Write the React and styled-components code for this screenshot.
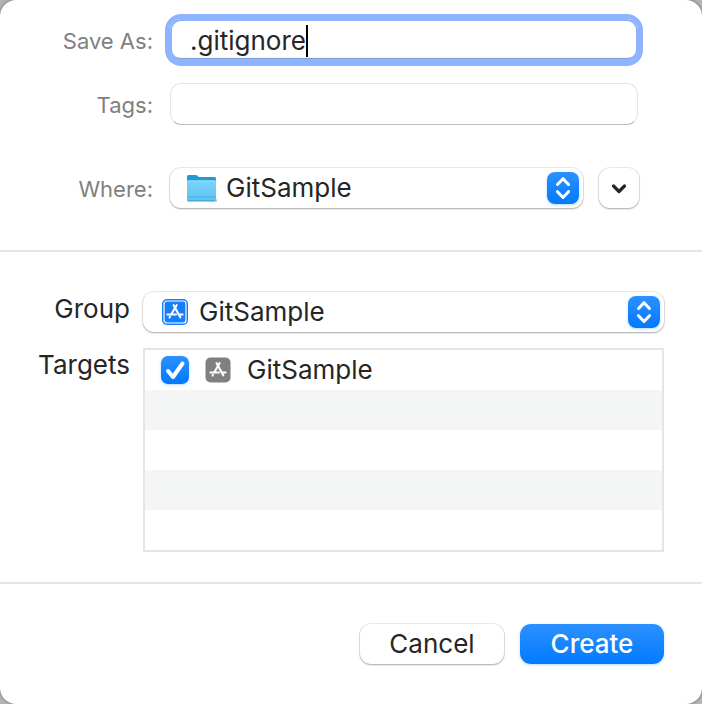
import React, { useState } from 'react';
import styled, { createGlobalStyle, css } from 'styled-components';

const targets = ['GitSample'];
const emptyRows = [1, 2, 3, 4];

const FolderIcon = () => (
  <svg width="32" height="32" viewBox="0 0 32 32" aria-hidden="true">
    <defs>
      <linearGradient id="folderFront" x1="0" y1="0" x2="0" y2="1">
        <stop offset="0" stopColor="#79d2fb" />
        <stop offset="1" stopColor="#5fc3f2" />
      </linearGradient>
    </defs>
    <rect x="1" y="27" width="30" height="3" rx="1" fill="#000" opacity="0.22" />
    <path d="M1 4.500Q1 3 2.500 3H9.500Q10.500 3 11.500 3.800L13 5H28.500Q30 5 30 6.500V12H1Z" fill="#1f9bd7" />
    <path d="M1 9.500Q1 8.500 2 8.500H29Q30 8.500 30 9.500V27.500Q30 29 28.500 29H2.500Q1 29 1 27.500Z" fill="url(#folderFront)" />
    <path d="M1.500 9H29.500" stroke="#9be0fd" strokeWidth="1" />
    <path d="M1 25H30" stroke="#3fa9dc" strokeWidth="0.8" />
    <path d="M2 28.600H29" stroke="#3ca0d0" strokeWidth="0.8" />
  </svg>
);

const AppGlyph = () => (
  <g stroke="#fff" strokeLinecap="round" fill="none">
    <path d="M11.600 6.200L18.300 18.300" strokeWidth="2.100" />
    <path d="M14.600 6.200L9.300 15.200" strokeWidth="2.100" />
    <path d="M5.400 15.400H14" strokeWidth="2" />
    <path d="M17.600 15.400H20.600" strokeWidth="2" />
    <path d="M8 17.700L7.500 18.600" strokeWidth="2" />
  </g>
);

const ProjectIcon = () => (
  <svg width="26" height="26" viewBox="0 0 26 26" aria-hidden="true">
    <rect width="26" height="26" rx="5" fill="#147efb" />
    <rect x="2" y="2" width="22" height="22" rx="3" fill="none" stroke="#fff" strokeWidth="1.200" />
    <AppGlyph />
  </svg>
);

const TargetIcon = () => (
  <svg width="26" height="26" viewBox="0 0 26 26" aria-hidden="true">
    <rect x="0.500" y="0.500" width="25" height="25" rx="5" fill="#808080" />
    <AppGlyph />
  </svg>
);

const StepperArrows = () => (
  <svg width="32" height="32" viewBox="0 0 32 32" aria-hidden="true">
    <path
      d="M10.500 12.500L16 6.700L21.500 12.500M10.500 19.700L16 25.500L21.500 19.700"
      fill="none"
      stroke="#fff"
      strokeWidth="3"
      strokeLinecap="round"
      strokeLinejoin="round"
    />
  </svg>
);

const ChevronIcon = () => (
  <svg width="20" height="20" viewBox="0 0 20 20" aria-hidden="true">
    <path d="M4.500 8L10 13.500L15.500 8" fill="none" stroke="#262626" strokeWidth="3.200" strokeLinecap="round" strokeLinejoin="round" />
  </svg>
);

const PopUp = ({ id, icon }) => (
  <PopUpFrame>
    <PopUpSelect id={id} defaultValue="GitSample">
      <option>GitSample</option>
    </PopUpSelect>
    <PopUpIcon>{icon}</PopUpIcon>
    <Stepper>
      <StepperArrows />
    </Stepper>
  </PopUpFrame>
);

const App = () => {
  const [name, setName] = useState('.gitignore');
  const [tags, setTags] = useState('');
  const [checked, setChecked] = useState(true);

  return (
    <>
      <GlobalStyle />
      <Sheet>
        <FileSection>
          <FileRow>
            <FileLabel htmlFor="name">Save As:</FileLabel>
            <FocusedField>
              <NameInput id="name" value={name} onChange={(e) => setName(e.target.value)} />
              <Caret />
            </FocusedField>
          </FileRow>
          <FileRow>
            <FileLabel htmlFor="tags">Tags:</FileLabel>
            <TagsInput id="tags" value={tags} onChange={(e) => setTags(e.target.value)} />
          </FileRow>
          <FileRow $spaced>
            <FileLabel htmlFor="where">Where:</FileLabel>
            <WhereControls>
              <PopUp id="where" icon={<FolderIcon />} />
              <ExpandButton type="button" aria-label="Show more">
                <ChevronIcon />
              </ExpandButton>
            </WhereControls>
          </FileRow>
        </FileSection>

        <ProjectSection>
          <ProjectRow>
            <ProjectLabel htmlFor="group">Group</ProjectLabel>
            <PopUp id="group" icon={<ProjectIcon />} />
          </ProjectRow>
          <ProjectRow>
            <ProjectLabel as="span" id="targets">Targets</ProjectLabel>
            <TargetTable aria-labelledby="targets">
              <tbody>
                {targets.map((target) => (
                  <TargetRow key={target}>
                    <TargetCell>
                      <TargetLabel>
                        <CheckFrame>
                          <Checkbox
                            type="checkbox"
                            checked={checked}
                            onChange={(e) => setChecked(e.target.checked)}
                          />
                          {checked && (
                            <CheckMark viewBox="0 0 28 28" aria-hidden="true">
                              <path d="M7 15L12 21L21.500 7.500" />
                            </CheckMark>
                          )}
                        </CheckFrame>
                        <TargetIcon />
                        {target}
                      </TargetLabel>
                    </TargetCell>
                  </TargetRow>
                ))}
                {emptyRows.map((row) => (
                  <TargetRow key={row}>
                    <TargetCell />
                  </TargetRow>
                ))}
              </tbody>
            </TargetTable>
          </ProjectRow>
        </ProjectSection>

        <Footer>
          <Button type="button">Cancel</Button>
          <Button type="button" $primary>Create</Button>
        </Footer>
      </Sheet>
    </>
  );
};

const GlobalStyle = createGlobalStyle`
  * {
    box-sizing: border-box;
  }

  body {
    margin: 0;
    background: #b4b4b4;
    color: #262626;
    font-family: Inter, 'Liberation Sans', sans-serif;
    font-size: 26px;
  }

  input, select, button {
    margin: 0;
    font: inherit;
    color: inherit;
  }
`;

const raised = css`
  background: #fff;
  border: 0;
  border-radius: 11px;
  box-shadow: 0 0 0 1px rgba(0, 0, 0, 0.08), 0 1px 2px rgba(0, 0, 0, 0.28);
`;

const blueFill = css`
  background: linear-gradient(#2d91ff, #007aff);
  box-shadow: 0 1px 3px rgba(0, 122, 255, 0.3);
`;

const Sheet = styled.main`
  display: flex;
  flex-direction: column;
  min-height: 100vh;
  background: #fff;
  border-radius: 16px;
  box-shadow: 0 0 3px rgba(0, 0, 0, 0.5);
`;

const FileSection = styled.section`
  display: flex;
  flex-direction: column;
  gap: 22px;
  padding: 19px 63px 42px 0;
  border-bottom: 2px solid #e5e5e5;
`;

const FileRow = styled.div`
  display: grid;
  grid-template-columns: 153px 1fr;
  column-gap: 17px;
  align-items: center;
  margin-top: ${(props) => (props.$spaced ? '21px' : '0')};
`;

const FileLabel = styled.label`
  padding-top: 2px;
  color: #808080;
  font-size: 22px;
  line-height: 38px;
  text-align: right;
`;

const FocusedField = styled.div`
  display: flex;
  align-items: center;
  height: 42px;
  margin-right: 1px;
  padding: 2px 20px 0;
  border-radius: 11px;
  box-shadow: inset 0 0 0 2px #8fb4ff, inset 0 -3px 1px #7295dc, 0 0 0 5px #8fb4ff;
`;

const NameInput = styled.input`
  field-sizing: content;
  min-width: 0;
  padding: 0;
  border: 0;
  outline: 0;
  background: transparent;
  line-height: 32px;
`;

const Caret = styled.span`
  width: 2px;
  height: 32px;
  background: #000;
`;

const TagsInput = styled.input`
  height: 42px;
  margin-right: 1px;
  padding: 0 20px;
  border: 1px solid #e6e6e6;
  border-bottom-color: #bdbdbd;
  border-radius: 11px;
  background: #fff;
`;

const WhereControls = styled.div`
  display: flex;
  gap: 16px;
`;

const PopUpFrame = styled.div`
  display: grid;
  flex: 1;
  grid-template-columns: 16px auto 1fr 32px 4px;
  align-items: center;
  height: 40px;
  ${raised}
`;

const PopUpSelect = styled.select`
  grid-area: 1 / 1 / 2 / 6;
  height: 40px;
  padding: 0 40px 2px 56px;
  border: 0;
  border-radius: 11px;
  outline: 0;
  background: transparent;
  appearance: none;
`;

const PopUpIcon = styled.span`
  display: flex;
  justify-content: center;
  grid-area: 1 / 2;
  width: 32px;
  pointer-events: none;
`;

const Stepper = styled.span`
  display: flex;
  grid-area: 1 / 4;
  border-radius: 8px;
  pointer-events: none;
  ${blueFill}
`;

const ExpandButton = styled.button`
  display: flex;
  align-items: center;
  justify-content: center;
  width: 40px;
  height: 40px;
  padding: 0;
  ${raised}
`;

const ProjectSection = styled.section`
  display: flex;
  flex-direction: column;
  gap: 16px;
  padding: 40px 38px 30px 0;
  border-bottom: 2px solid #e5e5e5;
`;

const ProjectRow = styled.div`
  display: grid;
  grid-template-columns: 130px 1fr;
  column-gap: 13px;
`;

const ProjectLabel = styled.label`
  line-height: 34px;
  text-align: right;
`;

const TargetTable = styled.table`
  width: 100%;
  border: 2px solid #e5e5e5;
  border-spacing: 0;
`;

const TargetRow = styled.tr`
  height: 40px;

  &:nth-child(even) {
    background: #f4f5f5;
  }
`;

const TargetCell = styled.td`
  padding: 0 16px;
`;

const TargetLabel = styled.label`
  display: flex;
  align-items: center;
  gap: 16px;
  line-height: 40px;
`;

const CheckFrame = styled.span`
  display: grid;
  width: 28px;
  height: 28px;
`;

const Checkbox = styled.input`
  grid-area: 1 / 1;
  width: 28px;
  height: 28px;
  appearance: none;
  ${(props) => (props.checked ? blueFill : raised)}
  border-radius: 7px;
`;

const CheckMark = styled.svg`
  grid-area: 1 / 1;
  fill: none;
  stroke: #fff;
  stroke-width: 4;
  stroke-linecap: round;
  stroke-linejoin: round;
  pointer-events: none;
`;

const Footer = styled.footer`
  display: flex;
  justify-content: flex-end;
  gap: 16px;
  padding: 40px 38px;
`;

const Button = styled.button`
  width: 144px;
  height: 40px;
  padding: 0 0 2px;
  ${raised}
  ${(props) =>
    props.$primary &&
    css`
      color: #fff;
      font-weight: 500;
      ${blueFill}
    `}
`;

export default App;
